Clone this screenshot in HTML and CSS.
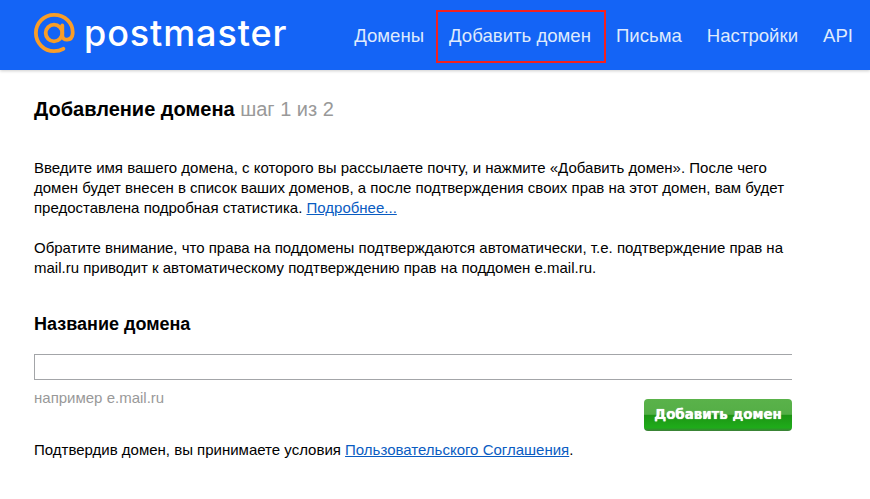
FILE: index.html
```html
<!DOCTYPE html>
<html lang="ru">
<head>
<meta charset="utf-8">
<title>Postmaster</title>
<link rel="stylesheet" href="styles.css">
</head>
<body>
<header class="header">
  <a class="logo" href="#">
    <svg class="logo-icon" width="41" height="41" viewBox="0 0 41 41" fill="none">
      <circle cx="20" cy="20" r="8.300" stroke="#f99d27" stroke-width="3.800"/>
      <path d="M28.300 12.500V22.500C28.300 28 37.800 28.500 38.600 21C39.600 10 31 1.900 20 1.900C10 1.900 1.900 10 1.900 20C1.900 30 10 38.100 20 38.100C23.500 38.100 26.800 37.300 29.300 35.800" stroke="#f99d27" stroke-width="3.800" stroke-linecap="round"/>
    </svg>
    <span class="logo-text">postmaster</span>
  </a>
  <nav class="nav">
    <a class="nav-item" href="#">Домены</a>
    <a class="nav-item nav-item-active" href="#">Добавить домен</a>
    <a class="nav-item" href="#">Письма</a>
    <a class="nav-item" href="#">Настройки</a>
    <a class="nav-item" href="#">API</a>
  </nav>
</header>
<main class="main">
  <h1 class="title">Добавление домена <span class="step">шаг 1 из 2</span></h1>
  <p class="para para-first">Введите имя вашего домена, с которого вы рассылаете почту, и нажмите «Добавить домен». После чего<br>домен будет внесен в список ваших доменов, а после подтверждения своих прав на этот домен, вам будет<br>предоставлена подробная статистика. <a class="link" href="#">Подробнее...</a></p>
  <p class="para">Обратите внимание, что права на поддомены подтверждаются автоматически, т.е. подтверждение прав на<br>mail.ru приводит к автоматическому подтверждению прав на поддомен e.mail.ru.</p>
  <h2 class="label">Название домена</h2>
  <div class="field"></div>
  <div class="form-row">
    <span class="hint">например e.mail.ru</span>
    <button class="btn" type="button">Добавить домен</button>
  </div>
  <p class="para terms">Подтвердив домен, вы принимаете условия <a class="link" href="#">Пользовательского Соглашения</a>.</p>
</main>
</body>
</html>
```
FILE: styles.css
```css
* { box-sizing: border-box; }
html, body { margin: 0; padding: 0; }
body {
  background: #fff;
  color: #000;
  font-family: "Liberation Sans", Arial, sans-serif;
  overflow: hidden;
}
.header {
  height: 70px;
  background: #1464f6;
  box-shadow: 0 1px 3px rgba(0,0,0,.2);
  display: flex;
  align-items: center;
  justify-content: space-between;
}
.logo {
  display: flex;
  align-items: center;
  margin-left: 34px;
  text-decoration: none;
  margin-top: -3px;
}
.logo-icon { display: block; margin-right: 9px; }
.logo-text {
  color: #fff;
  font-family: Inter, sans-serif;
  font-size: 36px;
  font-weight: 500;
  line-height: 40px;
  letter-spacing: .9px;
  margin-top: -2px;
}
.nav {
  display: flex;
  align-items: stretch;
  gap: 25px;
  margin-right: 17px;
  height: 53px;
  margin-top: 3px;
}
.nav-item {
  color: #dfeafc;
  font-family: "Liberation Sans", Arial, sans-serif;
  font-size: 18.600px;
  text-decoration: none;
  display: flex;
  align-items: center;
  padding-bottom: 2px;
}
.nav-item-active {
  border: 2px solid #f4211f;
  padding: 0 13px 2px 11px;
  margin: 0 -15px 0 -13px;
}
.main { padding: 0 78px 0 34px; }
.title {
  margin: 26px 0 0;
  font-size: 20px;
  line-height: 26px;
  font-weight: 700;
}
.step { color: #999; font-weight: 400; }
.para {
  margin: 0;
  font-size: 15px;
  line-height: 20px;
}
.para-first { margin-top: 36px; margin-bottom: 20px; white-space: nowrap; }
.link { color: #0a5cc2; }
.label {
  margin: 34px 0 0;
  font-size: 18px;
  line-height: 24px;
  font-weight: 700;
}
.field {
  margin-top: 18px;
  height: 26px;
  border: 1px solid #a3a5a8;
  border-right: 0;
  background: #fff;
}
.form-row {
  display: flex;
  justify-content: space-between;
  align-items: flex-start;
  height: 50px;
}
.hint {
  color: #999;
  font-size: 15px;
  line-height: 20px;
  margin-top: 8px;
}
.btn {
  margin-top: 19px;
  width: 148px;
  height: 32px;
  padding: 0 0 2px;
  border: 0;
  border-radius: 4px;
  color: #fff;
  font-family: "DejaVu Sans", sans-serif;
  font-size: 13.400px;
  font-weight: 700;
  text-shadow: 0 0 1px #fff;
  background: linear-gradient(#5ab24a 0, #54ae46 48%, #1d9414 50%, #1fab1a 88%, #1fab1a 90%, #3e7d3a 100%);
}
.terms { margin-top: 10px; }
```
